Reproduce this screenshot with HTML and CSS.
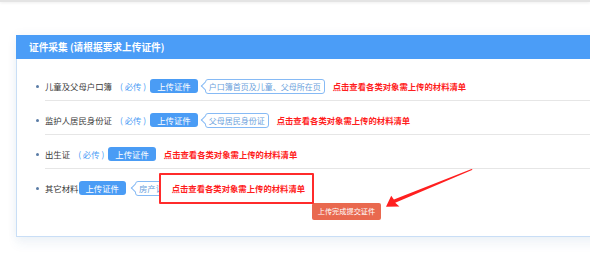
FILE: index.html
```html
<!DOCTYPE html>
<html lang="zh">
<head>
<meta charset="utf-8">
<link rel="stylesheet" href="styles.css">
</head>
<body>
<div class="topbar"></div>
<div class="page">
  <section class="panel">
    <header class="panel-head">证件采集 (请根据要求上传证件)</header>
    <ul class="list">
      <li class="row">
        <span class="label">儿童及父母户口簿</span>
        <span class="req">( 必传 )</span>
        <span class="btn">上传证件</span>
        <span class="tag">户口簿首页及儿童、父母所在页</span>
        <span class="link">点击查看各类对象需上传的材料清单</span>
      </li>
      <li class="row">
        <span class="label">监护人居民身份证</span>
        <span class="req">( 必传 )</span>
        <span class="btn">上传证件</span>
        <span class="tag">父母居民身份证</span>
        <span class="link">点击查看各类对象需上传的材料清单</span>
      </li>
      <li class="row">
        <span class="label">出生证</span>
        <span class="req">( 必传 )</span>
        <span class="btn">上传证件</span>
        <span class="link">点击查看各类对象需上传的材料清单</span>
      </li>
      <li class="row last">
        <span class="label">其它材料</span>
        <span class="btn tight">上传证件</span>
        <span class="tag wide">房产证</span>
        <span class="link boxed">点击查看各类对象需上传的材料清单</span>
      </li>
    </ul>
    <div class="foot">
      <span class="submit">上传完成提交证件</span>
    </div>
  </section>
  <svg class="arrow" width="590" height="279" viewBox="0 0 590 279">
    <polygon fill="#ff1f1f" points="386,206.8 391.2,195.8 393.9,199.6 471.6,168.9 472.6,169.8 395.2,202.8 399.4,206.4"/>
  </svg>
</div>
</body>
</html>
```

FILE: styles.css
```css
html, body {
  margin: 0;
  padding: 0;
  overflow: hidden;
  background: #ffffff;
}

body {
  width: 590px;
  height: 279px;
  font-family: "Noto Sans CJK SC", "Noto Sans", sans-serif;
  color: #333333;
}

.topbar {
  height: 2px;
  background: #e4e4e4;
  box-shadow: 0 1px 3px rgba(0, 0, 0, 0.08);
}

.page {
  position: relative;
  padding: 33px 0 0 16px;
}

.panel {
  width: 640px;
  background: #ffffff;
  border: 1px solid #c9def6;
  border-top: none;
  box-shadow: 0 0 10px rgba(40, 80, 140, 0.06), 0 8px 10px rgba(40, 90, 160, 0.05);
  padding-bottom: 16px;
}

.panel-head {
  height: 24px;
  line-height: 24px;
  background: #4b9df7;
  color: #ffffff;
  font-size: 9.7px;
  font-weight: bold;
  padding-left: 13px;
  margin: 0 -1px;
}

.list {
  list-style: none;
  margin: 0;
  padding: 7.5px 0 0 28px;
}

.row {
  display: flex;
  align-items: center;
  height: 14px;
  padding: 12.5px 0 6.5px;
  border-bottom: 1px solid #e6e6e6;
  font-size: 8.4px;
  white-space: pre;
}

.row::before {
  content: "";
  width: 3px;
  height: 3px;
  border-radius: 50%;
  background: #5a7ca6;
  margin-left: -9px;
  margin-right: 6px;
}

.row.last {
  border-bottom: none;
}

.label {
  color: #3a3a3a;
}

.req {
  color: #4a9cf5;
  margin-left: 7px;
  padding: 0 1px;
}

.btn {
  display: inline-block;
  height: 14px;
  line-height: 14px;
  padding: 0 7px;
  margin-left: 3px;
  background: #4a9cf5;
  color: #ffffff;
  border-radius: 3px;
  font-size: 8.4px;
}

.btn.tight {
  margin-left: 0;
}

.tag {
  position: relative;
  display: inline-block;
  height: 13px;
  line-height: 13px;
  margin-left: 7px;
  padding: 0 3px 0 3px;
  border: 1px solid #86baf5;
  border-radius: 3px;
  color: #6b9fdc;
  font-size: 8px;
  background: #ffffff;
}

.tag::before {
  content: "";
  position: absolute;
  left: -4px;
  top: 3.5px;
  width: 5px;
  height: 5px;
  background: #ffffff;
  border-left: 1px solid #86baf5;
  border-bottom: 1px solid #86baf5;
  transform: rotate(45deg);
}

.tag.wide {
  margin-left: 9px;
  padding-right: 6px;
  font-size: 8.4px;
}

.link {
  margin-left: 8px;
  color: #ff1e1e;
  font-weight: bold;
  font-size: 8.35px;
}

.link.boxed {
  position: relative;
  margin: -8.5px 0 -8.5px -12px;
  height: 27px;
  line-height: 27px;
  padding: 0 7px 0 10.5px;
  border: 2px solid #ff2b2b;
  background: #ffffff;
  border-radius: 1px;
}

.foot {
  display: flex;
  padding: 1px 0 0 295px;
}

.submit {
  display: block;
  width: 69px;
  height: 17px;
  line-height: 17px;
  text-align: center;
  background: #e9694f;
  color: #ffffff;
  font-size: 7.2px;
  border-radius: 2px;
}

.arrow {
  position: absolute;
  left: 0;
  top: -2px;
  pointer-events: none;
}
```
